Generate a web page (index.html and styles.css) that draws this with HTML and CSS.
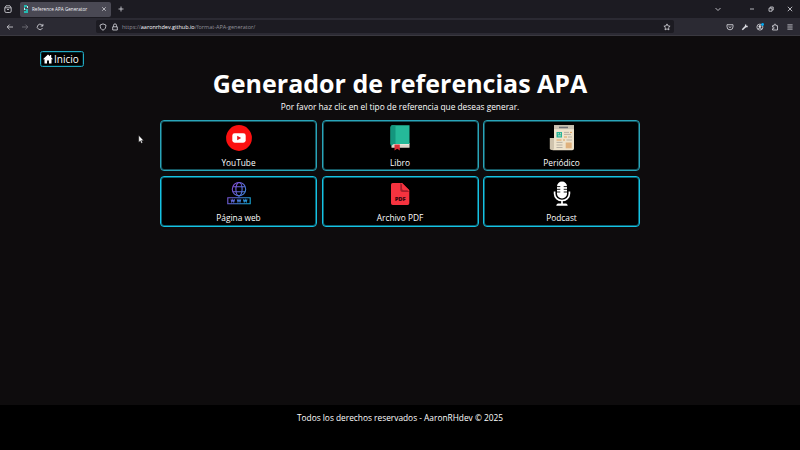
FILE: index.html
```html
<!DOCTYPE html>
<html lang="es">
<head>
<meta charset="utf-8">
<title>Reference APA Generator</title>
<link rel="stylesheet" href="styles.css">
</head>
<body>
<header class="browser">
  <div class="tabs">
    <svg class="recent" viewBox="0 0 10 10"><path d="M3 1.800h4M1.800 3.800h6.400v3.300a1.400 1.400 0 0 1-1.400 1.400H3.200a1.400 1.400 0 0 1-1.400-1.400zL3 1.800M7 1.800l1.200 2M4 5.500h2"/></svg>
    <div class="tab">
      <svg class="favicon" viewBox="0 0 6 8"><path fill="#24b9b0" d="M1 0h3v2H2v2h3v4H1V6h2V5H1z"/><path fill="#bceee8" d="M4 1h1v2H4zM1 3h1v2H1z"/></svg>
      <span class="tab-title">Reference APA Generator</span>
      <svg class="tab-close" viewBox="0 0 6 6"><path d="M1.200 1.200l3.600 3.600M4.800 1.200L1.200 4.800"/></svg>
    </div>
    <svg class="new-tab" viewBox="0 0 6 6"><path d="M3 .5v5M.5 3h5"/></svg>
    <div class="window-controls">
      <svg viewBox="0 0 8 8"><path d="M1.500 3L4 5.500 6.500 3"/></svg>
      <svg class="minimize" viewBox="0 0 8 8"><path d="M2 4h4"/></svg>
      <svg viewBox="0 0 8 8"><path d="M2 3.200h3v3H2zM3.200 3V2H6.200v3H5.200"/></svg>
      <svg viewBox="0 0 8 8"><path d="M1.800 1.800l4.400 4.400M6.200 1.800L1.800 6.200"/></svg>
    </div>
  </div>
  <div class="toolbar">
    <div class="nav">
      <svg viewBox="0 0 8 8"><path d="M7 4H1.200M3.600 1.600L1.200 4l2.400 2.400"/></svg>
      <svg class="dim" viewBox="0 0 8 8"><path d="M1 4h5.800M4.400 1.600L6.800 4 4.400 6.400"/></svg>
      <svg viewBox="0 0 8 8"><path d="M6.500 5A2.700 2.700 0 1 1 6 2.100L6.800 3M6.900 .900V3.100H4.700"/></svg>
    </div>
    <div class="address">
      <svg viewBox="0 0 8 8"><path d="M4 .9L6.900 2c0 2.800-.8 4.300-2.900 5.200C1.900 6.300 1.100 4.800 1.100 2z"/></svg>
      <svg viewBox="0 0 8 8"><path d="M1.700 3.800h4.600v3.200H1.700zM2.500 3.700V2.400a1.500 1.500 0 0 1 3 0v1.300"/></svg>
      <span class="url">https://<b>aaronrhdev.github.io</b>/format-APA-generator/</span>
      <svg class="star" viewBox="0 0 8 8"><path d="M4 .9l.95 2 2.150.3-1.550 1.500.4 2.200L4 5.850l-1.950 1.050.4-2.200L.9 3.200l2.150-.3z"/></svg>
    </div>
    <div class="extensions">
      <svg viewBox="0 0 8 8"><path d="M1 1.700h6v2.100a3 3 0 0 1-6 0zM2.600 3.400L4 4.700l1.400-1.300"/></svg>
      <svg viewBox="0 0 8 8"><path stroke-width="1.500" d="M1.300 6.800L4.700 3.400"/><path stroke-width="1.300" d="M4.600 1.500v2h2.100"/></svg>
      <svg viewBox="0 0 8 8"><circle cx="3.900" cy="4.100" r="3"/><circle cx="3.900" cy="3.500" r="1" fill="#ddd"/><path d="M2 6c.8-1.200 3-1.200 3.800 0"/><circle class="badge" cx="6.600" cy="1.500" r="1.400"/></svg>
      <svg viewBox="0 0 8 8"><path d="M1.500 2.700h1.600V2a.9.9 0 0 1 1.800 0v.7h1.600V7h-5V5.700h.8a.8.8 0 0 0 0-1.600h-.8z"/></svg>
      <svg viewBox="0 0 8 8"><path d="M1.400 1.900h5.200M1.400 4h5.200M1.400 6.100h5.200"/></svg>
    </div>
  </div>
</header>

<main>
  <a class="home"><svg viewBox="0 0 10 10"><path fill="#fff" d="M5 .4L.2 4.900l.7.7.6-.5v4.500H4V6.500h2v3.100h2.500V5.100l.6.500.7-.7-1.600-1.500V1H7v1.300z"/></svg>Inicio</a>
  <h1>Generador de referencias APA</h1>
  <p class="intro">Por favor haz clic en el tipo de referencia que deseas generar.</p>
  <section class="cards">
    <a class="card muted">
      <svg viewBox="0 0 26 26"><circle cx="13" cy="13" r="12.900" fill="#fb1010"/><rect x="6.300" y="8.300" width="13.400" height="9.400" rx="2.400" fill="#fff"/><path fill="#e8141b" d="M11.200 10.700v4.600l4-2.300z"/></svg>
      <span>YouTube</span>
    </a>
    <a class="card muted">
      <svg viewBox="0 0 26 26"><path fill="#eee5d9" d="M4.500 18h18v4.700h-18z"/><path fill="#c9c6bd" d="M5 20.500h17v1H5z"/><path fill="#25b999" d="M5.500.3h17v18.800H3.500V2.300a2 2 0 0 1 2-2z"/><path fill="#14957e" d="M5.500.3h3v18.800a4 4 0 0 0-4 2L3.500 20V2.300a2 2 0 0 1 2-2z"/><path fill="#d92f37" d="M7.500 19.500h5.300v6l-2.600-1.800-2.700 1.800z"/></svg>
      <span>Libro</span>
    </a>
    <a class="card muted">
      <svg viewBox="0 0 26 26"><path fill="#cfc3ad" d="M.8 13h5v12H2.500a1.700 1.700 0 0 1-1.700-1.700z"/><path fill="#eee3cc" d="M5 .2h20v23.300a1.800 1.800 0 0 1-1.800 1.800H3.300A2 2 0 0 0 5 23.300z"/><path fill="#c9c0b0" d="M5 .2h20v4H5z"/><path fill="#6d6e73" d="M10 1.700h9v1.500h-9z"/><path fill="#27b497" d="M7.500 7h5.500v5.500H7.500z"/><path fill="#eee3cc" d="M8.800 8.200h1v1h-1zM11 8.200h1v1h-1zM9 10.400h3v.8H9z"/><path stroke="#aaa398" stroke-width=".8" d="M15 7.400h5M15 9.400h7M7.500 17.400h6M7.500 20h6M7.500 22.500h6"/><path stroke="#dea05d" stroke-width="1" d="M21 7.400h2M15 12h3M7.500 15h5M14 15h2"/><path stroke="#aaa398" stroke-width=".8" d="M19 12h4M17.500 15H23"/><path fill="#dfb17d" d="M16.700 17.500h6v5.800h-6z"/></svg>
      <span>Periódico</span>
    </a>
    <a class="card">
      <svg viewBox="0 0 26 26" fill="none" stroke="url(#webGradient)" stroke-width="1.100"><defs><linearGradient id="webGradient" gradientUnits="userSpaceOnUse" x1="2" y1="6" x2="24" y2="20"><stop offset="0" stop-color="#8c43d2"/><stop offset=".5" stop-color="#5a70dc"/><stop offset="1" stop-color="#18a7d7"/></linearGradient></defs><circle cx="13" cy="8.200" r="6.700"/><ellipse cx="13" cy="8.200" rx="3.100" ry="6.700"/><path d="M7 5.700h12M7 10.700h12M1.800 16.700h22.400v6H1.800zM5 18.400l.8 2.400 1-2 1 2 .8-2.400M11.200 18.400l.8 2.400 1-2 1 2 .8-2.400M17.400 18.400l.8 2.400 1-2 1 2 .8-2.400"/></svg>
      <span>Página web</span>
    </a>
    <a class="card">
      <svg viewBox="0 0 26 26"><path fill="#f5333f" d="M5.700 2H15l7.300 7.300v12.900a1.700 1.700 0 0 1-1.700 1.700H5.700A1.700 1.700 0 0 1 4 22.200V3.700A1.700 1.700 0 0 1 5.700 2z"/><path fill="#a61e2b" d="M13.300 2l9 9h-6.500a2.500 2.500 0 0 1-2.500-2.500z"/><path fill="#f5333f" d="M15 2l7.300 7.300h-5.600A1.700 1.700 0 0 1 15 7.600z"/><text class="pdf-label" x="13.200" y="19.500" text-anchor="middle">PDF</text></svg>
      <span>Archivo PDF</span>
    </a>
    <a class="card">
      <svg viewBox="0 0 26 26"><rect x="8" y=".5" width="10" height="17" rx="5" fill="#fff"/><path stroke="#000" stroke-width=".9" d="M8 5.600h3.300M8 8.300h3.300M8 11h3.300M14.700 5.600H18M14.700 8.300H18M14.700 11H18"/><path fill="none" stroke="#fff" stroke-width="1.700" d="M5.600 10.500v2.200a7.400 6.800 0 0 0 14.800 0v-2.200M13 19.500v4"/><path fill="#fff" d="M7.300 24.800c0-1.800 1.300-2.300 2.600-2.300h6.200c1.300 0 2.600.5 2.600 2.300z"/></svg>
      <span>Podcast</span>
    </a>
  </section>
</main>
<footer>Todos los derechos reservados - AaronRHdev © 2025</footer>
<svg class="cursor" viewBox="0 0 6 9"><path fill="#fff" stroke="#222" stroke-width=".4" d="M.8.400v6.800l1.500-1.400 1 2.500 1.200-.5-1-2.400h2z"/></svg>
</body>
</html>
```
FILE: styles.css
```css
* { box-sizing: border-box; }
body {
  margin: 0;
  height: 450px;
  display: flex;
  flex-direction: column;
  overflow: hidden;
  background: #0e0c0d;
  color: #fff;
  font-family: "Open Sans", sans-serif;
}
svg { display: block; flex: none; }

.browser { height: 36px; }
.browser svg { width: 8px; height: 8px; fill: none; stroke: #dcdce2; stroke-width: .8; }
.tabs { height: 18px; display: flex; align-items: center; background: #1c1b22; }
.browser .recent { width: 10px; height: 10px; margin: 0 7px 0 3px; }
.tab {
  width: 91px;
  height: 15px;
  display: flex;
  align-items: center;
  padding: 0 4px 0 3px;
  border-radius: 2px;
  background: #4a4954;
}
.browser .favicon { width: 6px; height: 8px; stroke: none; }
.tab-title { flex: 1; margin-left: 3px; white-space: nowrap; color: #f0f0f5; font-size: 4.65px; }
.browser .tab-close { width: 6px; height: 6px; stroke-width: .7; }
.browser .new-tab { width: 6px; height: 6px; margin-left: 7px; }
.window-controls { display: flex; margin-left: auto; margin-right: 6px; gap: 11px; }
.window-controls .minimize { margin-left: 15px; }
.toolbar {
  height: 18px;
  display: flex;
  align-items: center;
  background: #2b2a33;
  border-bottom: 1px solid #3a3940;
}
.nav { display: flex; gap: 7px; margin-left: 6px; }
.nav .dim { stroke: #77767f; }
.address {
  width: 578px;
  height: 13px;
  display: flex;
  align-items: center;
  margin-left: 52px;
  padding: 0 3px;
  gap: 4px;
  border-radius: 2px;
  background: #1c1b22;
}
.url { color: #92919a; margin-left: -1px; white-space: nowrap; font-size: 5.5px; }
.url b { color: #fbfbfe; font-weight: 500; }
.star { margin-left: auto; }
.extensions { display: flex; gap: 7px; margin-left: auto; margin-right: 6px; }
.browser .badge { fill: #00a8f0; stroke: none; }

main { flex: 1; display: flex; flex-direction: column; align-items: center; }
.home {
  width: 44px;
  height: 16px;
  margin: 15px 0 0 40px;
  align-self: flex-start;
  display: flex;
  align-items: center;
  gap: 1px;
  padding-left: 2px;
  border: 1px solid #20a9c2;
  border-radius: 2.5px;
  box-shadow: inset 0 0 0 1px #20a9c233;
  background: #000;
  font-size: 10px;
  line-height: 14px;
}
.home svg { width: 10px; height: 10px; }
h1 { margin: 0 0 2px; font-size: 25px; line-height: 32px; font-weight: 700; white-space: nowrap; }
.intro { margin: 0; font-size: 8.33px; line-height: 11px; }
.cards {
  width: 480px;
  display: grid;
  grid-template-columns: repeat(3, 1fr);
  grid-auto-rows: 51px;
  gap: 4.5px;
  margin-top: 8.4px;
}
.card {
  display: flex;
  flex-direction: column;
  align-items: center;
  padding-top: 4px;
  border: 1px solid #15c3e4;
  border-radius: 4px;
  box-shadow: inset 0 0 0 1px #15c3e480;
  background: #000;
  font-size: 8.33px;
  line-height: 12px;
}
.card.muted { border-color: #29a5b9; box-shadow: inset 0 0 0 1px #29a5b980; }
.card svg { width: 26px; height: 26px; margin-bottom: 5.5px; }
.pdf-label { font: 800 5.8px "Open Sans", sans-serif; fill: #35060d; }
footer { height: 45px; background: #000; text-align: center; font-size: 8.33px; line-height: 12px; padding-top: 7px; }
.cursor { position: absolute; left: 138px; top: 135px; width: 6px; height: 9px; }
```
